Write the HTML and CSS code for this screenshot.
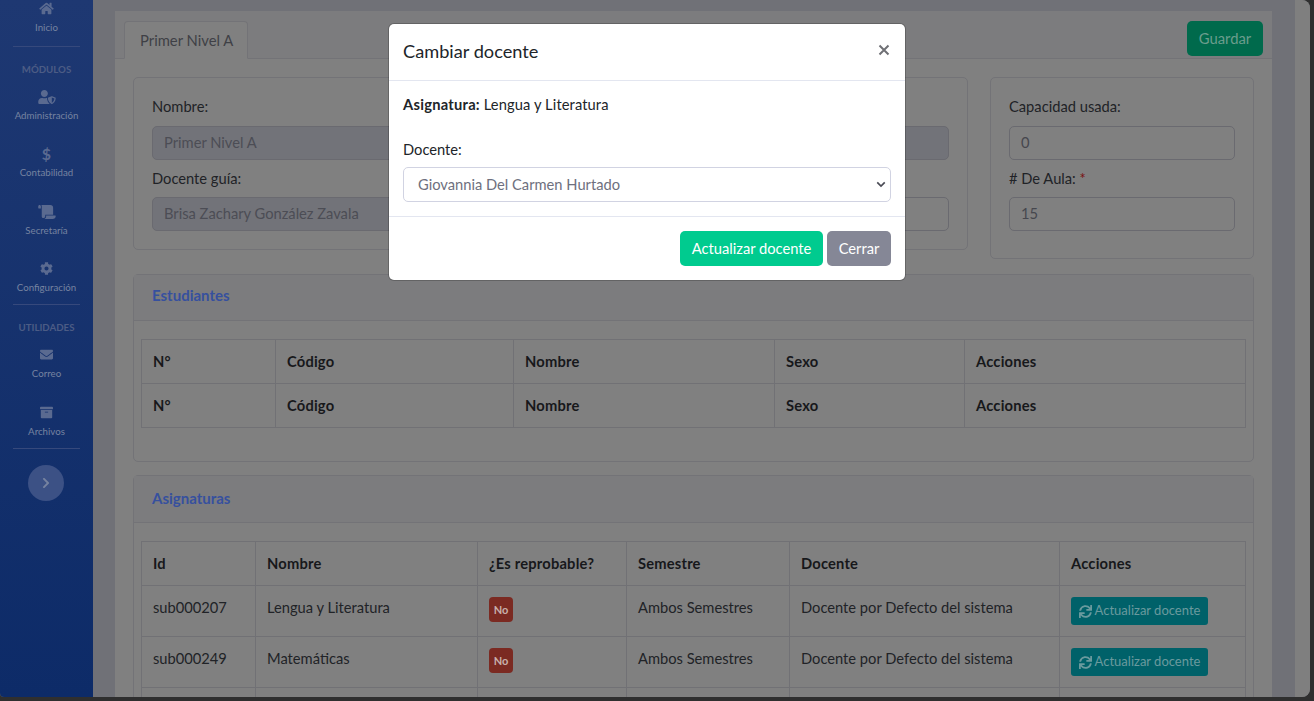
FILE: index.html
```html
<!DOCTYPE html>
<html lang="es">
<head>
<meta charset="utf-8">
<title>Cambiar docente</title>
<link rel="stylesheet" href="styles.css">
</head>
<body>
<div class="window">
  <aside class="sidebar">
    <div class="side-group side-first">
      <a class="side-item"><svg class="ico" viewBox="0 0 576 512"><path d="M280.37 148.26L96 300.11V464a16 16 0 0 0 16 16l112.06-.29a16 16 0 0 0 15.92-16V368a16 16 0 0 1 16-16h64a16 16 0 0 1 16 16v95.64a16 16 0 0 0 16 16.05L464 480a16 16 0 0 0 16-16V300L295.67 148.26a12.19 12.19 0 0 0-15.3 0zM571.6 251.47L488 182.56V44.05a12 12 0 0 0-12-12h-56a12 12 0 0 0-12 12v72.61L318.47 43a48 48 0 0 0-61 0L4.34 251.47a12 12 0 0 0-1.6 16.9l25.5 31A12 12 0 0 0 45.15 301l235.22-193.74a12.19 12.19 0 0 1 15.3 0L530.9 301a12 12 0 0 0 16.9-1.6l25.5-31a12 12 0 0 0-1.7-16.93z"/></svg><span>Inicio</span></a>
    </div>
    <div class="side-rule"></div>
    <div class="side-head">MÓDULOS</div>
    <div class="side-group side-tight">
      <a class="side-item"><svg class="ico ico-lg" viewBox="0 0 640 512"><path d="M622.3 271.1l-115.2-45c-4.1-1.6-12.6-3.7-22.2 0l-115.2 45c-10.7 4.2-17.7 14-17.7 24.9 0 111.6 68.7 188.8 132.9 213.9 9.6 3.7 18 1.6 22.2 0C558.4 489.9 640 420.5 640 296c0-10.9-7-20.7-17.7-24.9zM496 462.4V273.3l95.5 37.3c-5.6 87.1-60.9 135.4-95.5 151.8zM224 256c70.7 0 128-57.3 128-128S294.7 0 224 0 96 57.3 96 128s57.3 128 128 128zm96 40c0-2.5.8-4.8 1.1-7.2-2.5-.1-4.9-.8-7.5-.8h-16.7c-22.2 10.2-46.9 16-72.9 16s-50.6-5.8-72.9-16h-16.7C60.2 288 0 348.2 0 422.4V464c0 26.5 21.5 48 48 48h352c6.8 0 13.3-1.5 19.2-4-54-42.9-99.2-116.7-99.2-212z"/></svg><span>Administración</span></a>
      <a class="side-item"><span class="ico-glyph">$</span><span>Contabilidad</span></a>
      <a class="side-item"><svg class="ico ico-lg" viewBox="0 0 640 512"><path d="M48 0C21.53 0 0 21.53 0 48v64c0 8.84 7.16 16 16 16h80V48C96 21.53 74.47 0 48 0zm208 412.57V352h288V96c0-52.94-43.06-96-96-96H111.59C121.74 13.41 128 29.92 128 48v368c0 38.87 34.66 69.65 74.75 63.12C234.22 474 256 444.46 256 412.57zM288 384v32c0 52.93-43.06 96-96 96h336c61.86 0 112-50.14 112-112 0-8.84-7.16-16-16-16H288z"/></svg><span>Secretaría</span></a>
      <a class="side-item"><svg class="ico" viewBox="0 0 512 512"><path d="M487.4 315.7l-42.6-24.6c4.3-23.2 4.3-47 0-70.2l42.6-24.6c4.9-2.8 7.1-8.6 5.5-14-11.1-35.6-30-67.8-54.7-94.6-3.8-4.1-10-5.1-14.8-2.3L380.8 110c-17.9-15.4-38.5-27.3-60.8-35.1V25.8c0-5.6-3.9-10.5-9.4-11.7-36.7-8.2-74.3-7.8-109.2 0-5.5 1.2-9.4 6.1-9.4 11.7V75c-22.2 7.9-42.8 19.8-60.8 35.1L88.7 85.5c-4.9-2.8-11-1.9-14.8 2.3-24.7 26.7-43.6 58.9-54.7 94.6-1.7 5.4.6 11.2 5.5 14L67.3 221c-4.3 23.2-4.3 47 0 70.2l-42.6 24.6c-4.9 2.8-7.1 8.6-5.5 14 11.1 35.6 30 67.8 54.7 94.6 3.8 4.1 10 5.1 14.8 2.3l42.6-24.6c17.9 15.4 38.5 27.3 60.8 35.1v49.2c0 5.6 3.9 10.5 9.4 11.7 36.7 8.2 74.3 7.8 109.2 0 5.5-1.2 9.4-6.1 9.4-11.7v-49.2c22.2-7.9 42.8-19.8 60.8-35.1l42.6 24.6c4.9 2.8 11 1.9 14.8-2.3 24.7-26.7 43.6-58.9 54.7-94.6 1.5-5.5-.7-11.3-5.6-14.1zM256 336c-44.1 0-80-35.9-80-80s35.9-80 80-80 80 35.9 80 80-35.9 80-80 80z"/></svg><span>Configuración</span></a>
    </div>
    <div class="side-rule"></div>
    <div class="side-head">UTILIDADES</div>
    <div class="side-group side-last">
      <a class="side-item"><svg class="ico" viewBox="0 0 512 512"><path d="M502.3 190.8c3.9-3.1 9.7-.2 9.7 4.7V400c0 26.5-21.5 48-48 48H48c-26.5 0-48-21.5-48-48V195.6c0-5 5.7-7.8 9.7-4.7 22.4 17.4 52.1 39.5 154.1 113.6 21.1 15.4 56.7 47.8 92.2 47.6 35.7.3 72-32.8 92.3-47.6 102-74.1 131.6-96.3 154-113.7zM256 320c23.2.4 56.6-29.2 73.4-41.4 132.7-96.3 142.8-104.7 173.4-128.7 5.8-4.5 9.2-11.5 9.2-18.9v-19c0-26.5-21.5-48-48-48H48C21.5 64 0 85.5 0 112v19c0 7.4 3.4 14.3 9.2 18.9 30.6 23.9 40.7 32.4 173.4 128.7 16.8 12.2 50.2 41.8 73.4 41.4z"/></svg><span>Correo</span></a>
      <a class="side-item"><svg class="ico" viewBox="0 0 512 512"><path d="M32 448c0 17.7 14.3 32 32 32h384c17.7 0 32-14.3 32-32V160H32v288zm160-212c0-6.6 5.4-12 12-12h104c6.6 0 12 5.4 12 12v8c0 6.6-5.4 12-12 12H204c-6.6 0-12-5.4-12-12v-8zM480 32H32C14.3 32 0 46.3 0 64v48c0 8.8 7.2 16 16 16h480c8.8 0 16-7.2 16-16V64c0-17.7-14.3-32-32-32z"/></svg><span>Archivos</span></a>
    </div>
    <div class="side-rule"></div>
    <button class="side-toggle" type="button"><svg viewBox="0 0 320 512"><path d="M285.476 272.971L91.132 467.314c-9.373 9.373-24.569 9.373-33.941 0l-22.667-22.667c-9.357-9.357-9.375-24.522-.04-33.901L188.505 256 34.484 101.255c-9.335-9.379-9.317-24.544.04-33.901l22.667-22.667c9.373-9.373 24.569-9.373 33.941 0L285.475 239.03c9.373 9.372 9.373 24.568.001 33.941z"/></svg></button>
  </aside>

  <main class="content">
    <section class="card">
      <header class="card-tabs">
        <div class="tab">Primer Nivel A</div>
        <button class="btn-save" type="button">Guardar</button>
      </header>
      <div class="card-body">
        <div class="panels">
          <div class="panel panel-main">
            <div class="field"><label>Nombre:</label><div class="input disabled">Primer Nivel A</div></div>
            <div class="field"><label class="label-empty"></label><div class="input disabled"></div></div>
            <div class="field"><label>Docente guía:</label><div class="input disabled">Brisa Zachary González Zavala</div></div>
            <div class="field"><label class="label-empty"></label><div class="input"></div></div>
          </div>
          <div class="panel panel-side">
            <div class="field"><label>Capacidad usada:</label><div class="input">0</div></div>
            <div class="field"><label># De Aula: <span class="req">*</span></label><div class="input">15</div></div>
          </div>
        </div>

        <section class="block block-students">
          <h3 class="block-head">Estudiantes</h3>
          <div class="block-body">
            <table class="grid students">
              <colgroup><col class="s1"><col class="s2"><col class="s3"><col class="s4"><col class="s5"></colgroup>
              <thead><tr><th>N°</th><th>Código</th><th>Nombre</th><th>Sexo</th><th>Acciones</th></tr></thead>
              <tfoot><tr><th>N°</th><th>Código</th><th>Nombre</th><th>Sexo</th><th>Acciones</th></tr></tfoot>
            </table>
          </div>
        </section>

        <section class="block block-subjects">
          <h3 class="block-head">Asignaturas</h3>
          <div class="block-body">
            <table class="grid subjects">
              <colgroup><col class="a1"><col class="a2"><col class="a3"><col class="a4"><col class="a5"><col class="a6"></colgroup>
              <thead><tr><th>Id</th><th>Nombre</th><th>¿Es reprobable?</th><th>Semestre</th><th>Docente</th><th>Acciones</th></tr></thead>
              <tbody>
                <tr><td>sub000207</td><td>Lengua y Literatura</td><td><span class="badge">No</span></td><td>Ambos Semestres</td><td>Docente por Defecto del sistema</td><td><button class="btn-update" type="button"><svg viewBox="0 0 512 512"><path d="M440.65 12.57l4 82.77A247.16 247.16 0 0 0 255.83 8C134.73 8 33.91 94.92 12.29 209.82A12 12 0 0 0 24.09 224h49.05a12 12 0 0 0 11.67-9.26 175.91 175.91 0 0 1 317-56.94l-101.46-4.86a12 12 0 0 0-12.57 12v47.41a12 12 0 0 0 12 12H500a12 12 0 0 0 12-12V12a12 12 0 0 0-12-12h-47.37a12 12 0 0 0-11.98 12.57zM255.83 432a175.61 175.61 0 0 1-146-77.8l101.8 4.87a12 12 0 0 0 12.57-12v-47.4a12 12 0 0 0-12-12H12a12 12 0 0 0-12 12V500a12 12 0 0 0 12 12h47.35a12 12 0 0 0 12-12.6l-4.15-82.57A247.17 247.17 0 0 0 255.83 504c121.11 0 221.93-86.92 243.55-201.82a12 12 0 0 0-11.8-14.18h-49.05a12 12 0 0 0-11.67 9.26A175.86 175.86 0 0 1 255.83 432z"/></svg>Actualizar docente</button></td></tr>
                <tr><td>sub000249</td><td>Matemáticas</td><td><span class="badge">No</span></td><td>Ambos Semestres</td><td>Docente por Defecto del sistema</td><td><button class="btn-update" type="button"><svg viewBox="0 0 512 512"><path d="M440.65 12.57l4 82.77A247.16 247.16 0 0 0 255.83 8C134.73 8 33.91 94.92 12.29 209.82A12 12 0 0 0 24.09 224h49.05a12 12 0 0 0 11.67-9.26 175.91 175.91 0 0 1 317-56.94l-101.46-4.86a12 12 0 0 0-12.57 12v47.41a12 12 0 0 0 12 12H500a12 12 0 0 0 12-12V12a12 12 0 0 0-12-12h-47.37a12 12 0 0 0-11.98 12.57zM255.83 432a175.61 175.61 0 0 1-146-77.8l101.8 4.87a12 12 0 0 0 12.57-12v-47.4a12 12 0 0 0-12-12H12a12 12 0 0 0-12 12V500a12 12 0 0 0 12 12h47.35a12 12 0 0 0 12-12.6l-4.15-82.57A247.17 247.17 0 0 0 255.83 504c121.11 0 221.93-86.92 243.55-201.82a12 12 0 0 0-11.8-14.18h-49.05a12 12 0 0 0-11.67 9.26A175.86 175.86 0 0 1 255.83 432z"/></svg>Actualizar docente</button></td></tr>
                <tr><td></td><td></td><td></td><td></td><td></td><td></td></tr>
              </tbody>
            </table>
          </div>
        </section>
      </div>
    </section>
  </main>
  <div class="scrollbar"></div>

  <div class="overlay">
    <div class="modal">
      <header class="modal-head">
        <h2>Cambiar docente</h2>
        <svg class="modal-close" viewBox="0 0 12 12"><path d="M1.5 1.5l9 9M10.5 1.5l-9 9"/></svg>
      </header>
      <div class="modal-body">
        <p class="modal-subject"><strong>Asignatura:</strong> Lengua y Literatura</p>
        <label class="modal-label">Docente:</label>
        <div class="select">Giovannia Del Carmen Hurtado<svg viewBox="0 0 12 8"><path d="M1.5 1.5L6 6l4.5-4.5"/></svg></div>
      </div>
      <footer class="modal-foot">
        <button class="btn btn-green" type="button">Actualizar docente</button>
        <button class="btn btn-gray" type="button">Cerrar</button>
      </footer>
    </div>
  </div>
</div>
</body>
</html>
```

FILE: styles.css
```css
* { box-sizing: border-box; }
html, body { margin: 0; height: 100%; overflow: hidden; }
body {
  background: #2f2f2f;
  font-family: "Lato", "Noto Sans", sans-serif;
  font-size: 14.7px;
  line-height: 21.6px;
  color: #212327;
}
.window {
  position: relative;
  display: flex;
  width: 1310px;
  height: 697px;
  overflow: hidden;
  border-radius: 0 8px 8px 4px;
  background: #707177;
}
.sidebar {
  width: 93px;
  flex: none;
  background: linear-gradient(180deg, #1e3872 0%, #0d2b68 100%);
  color: #7683a0;
  font-size: 9.7px;
  line-height: 14px;
}
.side-first { margin-top: -4px; }
.side-group { display: flex; flex-direction: column; gap: 8px; }
.side-tight { margin-bottom: -2px; }
.side-last { margin-bottom: -1px; gap: 8.5px; }
.side-item {
  height: 49.5px;
  padding-top: 6px;
  display: flex;
  flex-direction: column;
  align-items: center;
  gap: 5px;
}
.ico { width: 15px; height: 13px; fill: #5a6a90; flex: none; }
.ico-lg { width: 18px; height: 14px; margin-bottom: -1px; }
.ico-glyph { height: 13px; font-size: 16px; line-height: 13px; font-weight: 700; color: #5a6a90; }
.side-rule { height: 1px; margin: 0 13px; background: #36497c; }
.side-head {
  height: 37px;
  padding-top: 15px;
  text-align: center;
  font-size: 9.7px;
  font-weight: 700;
  color: #4c5c85;
}
.side-toggle {
  display: flex;
  align-items: center;
  justify-content: center;
  width: 36px;
  height: 36px;
  margin: 16px auto 0 28px;
  padding: 0;
  border: 0;
  border-radius: 50%;
  background: #3c5185;
}
.side-toggle svg { width: 8px; height: 12px; fill: #7683a0; }

.content { flex: 1; min-width: 0; padding: 11px 23px 0 22px; overflow: hidden; }
.scrollbar { width: 15px; flex: none; background: #7f7f7f; }

.card { background: #808080; border-radius: 4px; }
.card-tabs {
  display: flex;
  justify-content: space-between;
  align-items: flex-start;
  height: 48px;
  padding: 10px 9px 0;
  background: #7c7c7e;
  border-bottom: 1px solid #737377;
}
.tab {
  height: 38px;
  padding: 8px 14px 8px 15px;
  font-size: 14.8px;
  color: #3f4046;
  background: #808080;
  border: 1px solid #737377;
  border-bottom-color: #808080;
  border-radius: 4px 4px 0 0;
}
.btn-save {
  width: 76px;
  height: 35px;
  padding: 0;
  border: 0;
  border-radius: 5px;
  background: #006a4c;
  color: #6b9d8c;
  font: inherit;
  font-size: 14.8px;
}
.card-body { padding: 18px 18px 0; }

.panels { display: flex; align-items: flex-start; gap: 22px; }
.panel { border: 1px solid #737377; border-radius: 5px; padding: 18px; }
.panel-main {
  flex: 1;
  display: grid;
  grid-template-columns: 1fr 1fr;
  column-gap: 22px;
  row-gap: 8px;
}
.panel-side { width: 264px; flex: none; display: flex; flex-direction: column; gap: 8px; padding-bottom: 27px; }
.field label { display: block; margin-bottom: 8px; color: #212327; }
.field .label-empty { height: 21.6px; }
.req { color: #7a1212; }
.input {
  height: 34px;
  padding: 5px 11px;
  border: 1px solid #6a6a70;
  border-radius: 5px;
  color: #46474e;
}
.input.disabled { background: #727379; color: #4c4d55; }

.block { border: 1px solid #737377; border-radius: 5px; }
.block-students { margin-top: 15px; padding-bottom: 33px; }
.block-subjects { margin-top: 13px; }
.block-head {
  margin: 0;
  height: 46px;
  padding: 10px 18px;
  background: #7c7c7e;
  border-bottom: 1px solid #737377;
  font-size: 15px;
  font-weight: 700;
  color: #36509e;
}
.block-subjects .block-head { height: 47px; padding-top: 12px; }
.block-body { padding: 18px 7px 0; }
.grid { width: 1104px; table-layout: fixed; border-collapse: collapse; }
.grid th, .grid td {
  border: 1px solid #717175;
  padding: 11px;
  text-align: left;
  vertical-align: top;
  color: #212327;
}
.grid th { font-weight: 700; color: #17181b; letter-spacing: .2px; }
.students th { height: 44px; padding-top: 10.5px; padding-bottom: 10.5px; }
.subjects th { height: 44px; padding-top: 10.5px; padding-bottom: 10.5px; }
.subjects tbody tr { height: 50.5px; }
.s1 { width: 134px; } .s2 { width: 238px; } .s3 { width: 261px; } .s4 { width: 190px; } .s5 { width: 281px; }
.a1 { width: 114px; } .a2 { width: 222px; } .a3 { width: 149px; } .a4 { width: 163px; } .a5 { width: 270px; } .a6 { width: 186px; }
.badge {
  display: inline-block;
  width: 24px;
  height: 25px;
  border-radius: 4px;
  background: #7b2a22;
  color: #c8b0ac;
  font-size: 11px;
  line-height: 25px;
  font-weight: 700;
  text-align: center;
  vertical-align: top;
}
.btn-update {
  display: flex;
  align-items: center;
  justify-content: center;
  gap: 3px;
  width: 137px;
  height: 28px;
  padding: 0;
  border: 0;
  border-radius: 3px;
  background: #006169;
  color: #6a9a9e;
  font: inherit;
  font-size: 13px;
  white-space: nowrap;
}
.btn-update svg { width: 13px; height: 13px; fill: #6a9a9e; }

.overlay {
  position: absolute;
  inset: 0;
  display: flex;
  justify-content: center;
  align-items: flex-start;
  padding: 24px 16px 0 0;
}
.modal {
  width: 516px;
  height: 256px;
  background: #fff;
  border-radius: 5px;
  box-shadow: 0 0 0 1px rgba(0,0,0,.2);
  color: #212529;
}
.modal-head {
  display: flex;
  justify-content: space-between;
  height: 57px;
  padding: 15px 14px;
  border-bottom: 1px solid #e3e6f0;
}
.modal-head h2 { margin: 0; font-size: 18.2px; line-height: 24px; font-weight: 400; }
.modal-close { width: 12px; height: 12px; margin: 5px 1px 0 0; fill: none; stroke: #6f7075; stroke-width: 2; }
.modal-body { height: 136px; padding: 13px 14px; border-bottom: 1px solid #e3e6f0; }
.modal-subject { margin: 0 0 23px; letter-spacing: .1px; }
.modal-subject strong { font-weight: 700; letter-spacing: .25px; }
.modal-label { display: block; margin-bottom: 7px; }
.select {
  display: flex;
  align-items: center;
  justify-content: space-between;
  height: 35px;
  padding: 0 4px 0 14px;
  border: 1px solid #d1d3e2;
  border-radius: 5px;
  color: #6e707e;
}
.select svg { width: 10px; height: 7px; fill: none; stroke: #4a4b55; stroke-width: 2; }
.modal-foot { display: flex; justify-content: flex-end; gap: 4px; padding: 14px; }
.btn {
  height: 35px;
  padding: 0;
  border: 0;
  border-radius: 5px;
  color: #fff;
  font: inherit;
  white-space: nowrap;
}
.btn-green { width: 143px; background: #00cb8f; }
.btn-gray { width: 64px; background: #858796; }
```
